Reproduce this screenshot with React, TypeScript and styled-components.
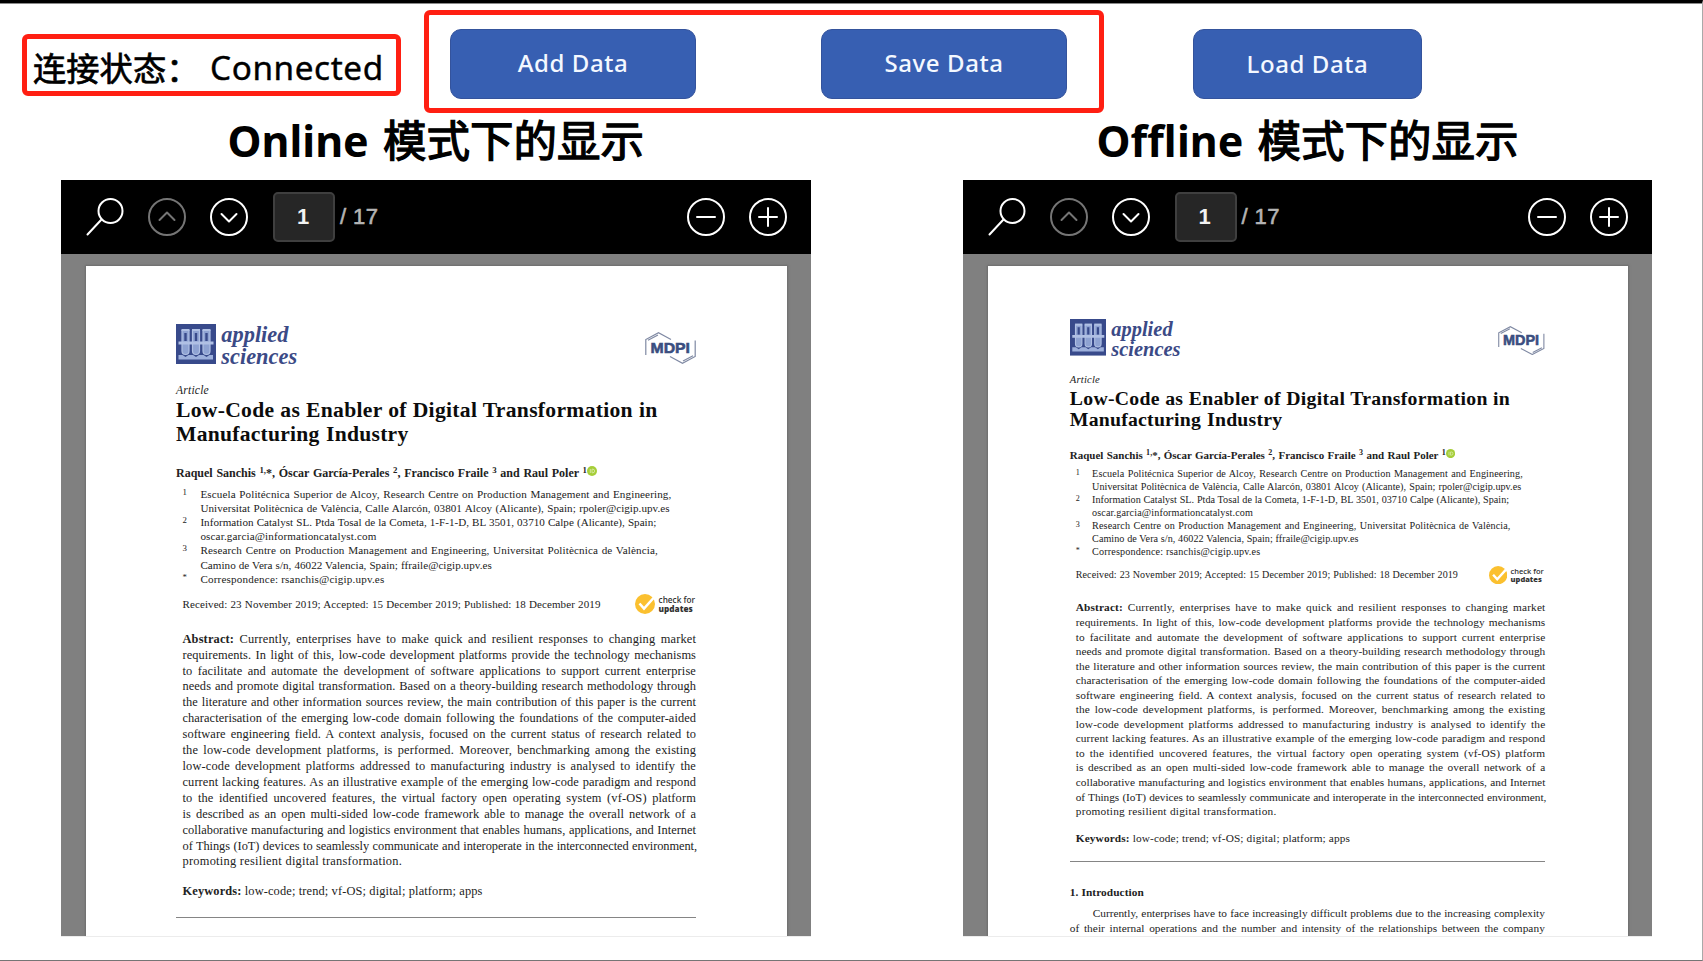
import React from "react";
import styled, { createGlobalStyle, css } from "styled-components";

const GlobalStyle = createGlobalStyle`
  * { box-sizing: border-box; }
  html, body { margin: 0; padding: 0; background: #fff; }
`;

const sans = `"Noto Sans", "Noto Sans CJK SC", sans-serif`;
const serif = `"Liberation Serif", serif`;

/* Document lengths scale with the zoom of the page they belong to. */
const u = (n: number) => `calc(var(--u) * ${n})`;

const Screen = styled.main`
  width: 1703px;
  height: 961px;
  overflow: hidden;
  border-top: 3px solid #000;
  border-right: 1px solid #a9a9a9;
  border-bottom: 1px solid #757575;
  background: #fff;
  font-family: ${sans};
  color: #000;
`;

const TopBar = styled.header`
  display: flex;
  align-items: flex-start;
  height: 111px;
  padding: 7px 0 0 22px;
  border-top: 1px solid #8a8a8a;
`;

const RedFrame = styled.div`
  display: flex;
  align-items: center;
  border: 5px solid #ff1f12;
  border-radius: 6px;
`;

const StatusFrame = styled(RedFrame)`
  width: 379px;
  height: 62px;
  margin-top: 23px;
  padding: 4px 0 0 6px;
  line-height: 50px;
  white-space: nowrap;
`;

const StatusLabel = styled.span`
  width: 177px;
  font-family: "Noto Sans CJK SC", sans-serif;
  font-size: 33.3px;
  -webkit-text-stroke: 0.7px #000;
`;

const StatusValue = styled.span`
  font-size: 33.3px;
  letter-spacing: 0.6px;
  -webkit-text-stroke: 0.4px #000;
`;

const ActionFrame = styled(RedFrame)`
  width: 680px;
  height: 103px;
  margin: -1px 89px 0 23px;
  padding: 4px 32px 0 21px;
  justify-content: space-between;
`;

const ActionButton = styled.button<{ $width: number }>`
  width: ${(p) => p.$width}px;
  height: 70px;
  padding: 0 0 2px;
  border: 1px solid #34539c;
  border-radius: 11px;
  background: #375fb2;
  color: #f4f8ff;
  font-family: ${sans};
  font-size: 24px;
  font-weight: 500;
  letter-spacing: 0.6px;
`;

const LoadButton = styled(ActionButton)`
  margin-top: 17.5px;
  padding-bottom: 0;
`;

const Columns = styled.section`
  display: flex;
  gap: 151.5px;
  padding-left: 61px;
`;

const Column = styled.div<{ $width: number }>`
  display: flex;
  flex-direction: column;
  width: ${(p) => p.$width}px;
`;

const Heading = styled.h1<{ $indent: number }>`
  height: 66px;
  margin: 0;
  padding-left: ${(p) => p.$indent}px;
  font-size: 43px;
  font-weight: 700;
  line-height: 54px;
  white-space: nowrap;
`;

const HeadingCjk = styled.span`
  margin-left: 3px;
  font-family: "Noto Sans CJK SC", sans-serif;
  font-size: 43.5px;
  font-weight: 400;
  line-height: 0;
  -webkit-text-stroke: 1.3px #000;
`;

const Viewer = styled.div`
  height: 757px;
  overflow: hidden;
  border-bottom: 1px solid #ececec;
  background: #808080;
`;

const Toolbar = styled.div`
  display: flex;
  align-items: center;
  height: 74px;
  padding: 0 24.5px 0 25px;
  background: #000;
`;

const ToolIcon = styled.svg<{ $dim?: boolean; $gap?: number }>`
  flex: none;
  width: 38px;
  height: 38px;
  margin-right: ${(p) => p.$gap ?? 0}px;
  fill: none;
  stroke: ${(p) => (p.$dim ? "#757575" : "#fff")};
  stroke-width: 2;
  stroke-linecap: round;
  stroke-linejoin: round;
`;

const PageInput = styled.div`
  display: flex;
  align-items: center;
  justify-content: center;
  width: 62px;
  height: 50px;
  padding-right: 2px;
  border: 2px solid #3f3f3f;
  border-radius: 5px;
  background: #262626;
  color: #f2f2f2;
  font: 700 22px "Liberation Sans", sans-serif;
`;

const PageCount = styled.div`
  flex: 1;
  padding-left: 5px;
  color: #b4b4b4;
  font: 22px "Liberation Sans", sans-serif;
  letter-spacing: 0.4px;
  -webkit-text-stroke: 0.6px #b4b4b4;
`;

const Page = styled.article<{ $scale: number }>`
  --u: ${(p) => p.$scale}px;
  height: 700px;
  margin: 12px 24px 0 25px;
  padding: ${u(58)} ${u(91)} 0 ${u(90)};
  background: #fff;
  box-shadow: 0 0 2px 1px #6c6c6c;
  color: #222;
  font-family: ${serif};
  white-space: nowrap;
`;

const Masthead = styled.div`
  display: flex;
  justify-content: space-between;
  height: ${u(40)};
`;

const Journal = styled.div`
  display: flex;
  gap: ${u(5.3)};
`;

const JournalName = styled.div`
  color: #3b4a86;
  font-size: ${u(22.4)};
  font-style: italic;
  font-weight: 700;
  line-height: ${u(22)};
`;

const JournalMark = styled.svg`
  width: ${u(40)};
  height: ${u(40)};
`;

const PublisherMark = styled.svg`
  width: ${u(51)};
  height: ${u(32)};
  margin-top: ${u(7.5)};
`;

const Line = styled.div<{ $w?: number; $indent?: number; $track?: number }>`
  width: ${(p) => (p.$w ? u(p.$w) : "auto")};
  margin-left: ${(p) => u(p.$indent ?? 0)};
  text-align: justify;
  text-align-last: justify;
  ${(p) =>
    p.$track !== undefined &&
    css`
      letter-spacing: ${u(p.$track)};
    `}
`;

const Kind = styled.div`
  margin-top: ${u(20)};
  font-size: ${u(11.6)};
  font-style: italic;
  line-height: ${u(14)};
  letter-spacing: ${u(0.2)};
`;

const Title = styled.h2`
  margin: ${u(1)} 0 0;
  color: #0c0c0c;
  font-size: ${u(21.6)};
  font-weight: 700;
  line-height: ${u(23.8)};
  letter-spacing: ${u(0.3)};
`;

const Authors = styled.div`
  display: flex;
  align-items: center;
  margin-top: ${u(18.2)};
  font-size: ${u(12)};
  font-weight: 700;
  line-height: ${u(16)};
`;

const Sup = styled.span`
  position: relative;
  top: ${u(-3.6)};
  font-size: ${u(8.8)};
  line-height: 0;
`;

const Orcid = styled.svg`
  width: ${u(10)};
  height: ${u(10)};
  margin: ${u(-3.5)} 0 0 ${u(0.4)};
`;

const Affiliations = styled.div`
  margin-top: ${u(6)};
  font-size: ${u(11.1)};
  line-height: ${u(14.17)};
  letter-spacing: ${u(0.04)};
`;

const Affiliation = styled.div`
  display: grid;
  grid-template-columns: ${u(17.9)} auto;
  padding-left: ${u(6.5)};
`;

const AffiliationMark = styled.span`
  font-size: ${u(8.8)};
  line-height: ${u(10)};
`;

const Dates = styled.div`
  display: flex;
  align-items: center;
  justify-content: space-between;
  height: ${u(22)};
  margin-top: ${u(6.9)};
  padding-left: ${u(6.5)};
  font-size: ${u(11)};
  line-height: ${u(22)};
  letter-spacing: ${u(0.1)};
`;

const Updates = styled.div`
  display: flex;
  align-items: center;
  gap: ${u(3.6)};
  width: ${u(61)};
  color: #333;
  font-family: "Open Sans", sans-serif;
  font-size: ${u(8.2)};
  font-weight: 600;
  line-height: ${u(9)};
  letter-spacing: 0;

  b { font-weight: 800; }
`;

const UpdatesMark = styled.svg`
  flex: none;
  width: ${u(20)};
  height: ${u(20)};
`;

const Body = styled.div<{ $top: number; $left?: number }>`
  margin-top: ${(p) => u(p.$top)};
  padding-left: ${(p) => u(p.$left ?? 0)};
  font-size: ${u(12.4)};
  line-height: ${u(15.9)};
  letter-spacing: ${u(0.06)};
`;

const Rule = styled.hr`
  height: 1px;
  margin: ${u(16.8)} 0 0;
  border: 0;
  background: #858585;
`;

type TextLine = { text: string; w?: number; track?: number };

const abstractLines: TextLine[] = [
  { text: "Currently, enterprises have to make quick and resilient responses to changing market", track: 0.15 },
  { text: "requirements. In light of this, low-code development platforms provide the technology mechanisms" },
  { text: "to facilitate and automate the development of software applications to support current enterprise", track: 0.12 },
  { text: "needs and promote digital transformation. Based on a theory-building research methodology through" },
  { text: "the literature and other information sources review, the main contribution of this paper is the current" },
  { text: "characterisation of the emerging low-code domain following the foundations of the computer-aided" },
  { text: "software engineering field. A context analysis, focused on the current status of research related to" },
  { text: "the low-code development platforms, is performed. Moreover, benchmarking among the existing", track: 0.15 },
  { text: "low-code development platforms addressed to manufacturing industry is analysed to identify the", track: 0.15 },
  { text: "current lacking features. As an illustrative example of the emerging low-code paradigm and respond", track: 0.1 },
  { text: "to the identified uncovered features, the virtual factory open operating system (vf-OS) platform", track: 0.15 },
  { text: "is described as an open multi-sided low-code framework able to manage the overall network of a" },
  { text: "collaborative manufacturing and logistics environment that enables humans, applications, and Internet", track: 0.02 },
  { text: "of Things (IoT) devices to seamlessly communicate and interoperate in the interconnected environment,", w: 514.5, track: -0.07 },
  { text: "promoting resilient digital transformation.", w: 219.6, track: 0.25 },
];

const affiliations: { mark: string; lines: TextLine[] }[] = [
  {
    mark: "1",
    lines: [
      { text: "Escuela Politécnica Superior de Alcoy, Research Centre on Production Management and Engineering,", w: 471, track: 0.12 },
      { text: "Universitat Politècnica de València, Calle Alarcón, 03801 Alcoy (Alicante), Spain; rpoler@cigip.upv.es", w: 469.2 },
    ],
  },
  {
    mark: "2",
    lines: [
      { text: "Information Catalyst SL. Ptda Tosal de la Cometa, 1-F-1-D, BL 3501, 03710 Calpe (Alicante), Spain;", w: 456, track: 0.02 },
      { text: "oscar.garcia@informationcatalyst.com", w: 175.7, track: 0.14 },
    ],
  },
  {
    mark: "3",
    lines: [
      { text: "Research Centre on Production Management and Engineering, Universitat Politècnica de València,", w: 457.5, track: 0.12 },
      { text: "Camino de Vera s/n, 46022 Valencia, Spain; ffraile@cigip.upv.es", w: 291.4 },
    ],
  },
  { mark: "*", lines: [{ text: "Correspondence: rsanchis@cigip.upv.es", w: 183.9, track: 0.18 }] },
];

function ViewerToolbar() {
  return (
    <Toolbar>
      <ToolIcon viewBox="0 0 38 38" $gap={24}>
        <circle cx="24.5" cy="13" r="12" />
        <path d="M15.5 21.5 1.5 36.5" />
      </ToolIcon>
      <ToolIcon viewBox="0 0 38 38" $dim $gap={24}>
        <circle cx="19" cy="19" r="18" />
        <path d="M11.5 22 19 14.5 26.5 22" />
      </ToolIcon>
      <ToolIcon viewBox="0 0 38 38" $gap={25}>
        <circle cx="19" cy="19" r="18" />
        <path d="M11.5 16 19 23.5 26.5 16" />
      </ToolIcon>
      <PageInput>1</PageInput>
      <PageCount>/ 17</PageCount>
      <ToolIcon viewBox="0 0 38 38" $gap={24}>
        <circle cx="19" cy="19" r="18" />
        <path d="M10 19h18" />
      </ToolIcon>
      <ToolIcon viewBox="0 0 38 38">
        <circle cx="19" cy="19" r="18" />
        <path d="M10 19h18M19 10v18" />
      </ToolIcon>
    </Toolbar>
  );
}

function TestTubes() {
  return (
    <JournalMark viewBox="0 0 40 40">
      <rect width="40" height="40" fill="#384a8b" />
      {[6, 16.5, 27].map((x) => (
        <g key={x}>
          <path d={`M${x} 6.5h7v20.5a3.5 3.5 0 0 1-7 0z`} fill="#8ea2d2" stroke="#b0c0e4" strokeWidth="1.2" />
          <path d={`M${x + 3.5} 9v8`} stroke="#384a8b" strokeWidth="2.4" />
          <path d={`M${x - 0.5} 6h8`} stroke="#b0c0e4" strokeWidth="2" />
        </g>
      ))}
      <path d="M2.5 17.5h35v3h-35z" fill="#b0c0e4" />
      <path d="M2.5 31h4l3 2 3-2h4.5l3 2 3-2h4.5l3 2 3-2h3.5v4.500h-34.500z" fill="#9db0dc" />
    </JournalMark>
  );
}

function Publisher() {
  return (
    <PublisherMark viewBox="0 0 51 32">
      <g fill="none" stroke="#7f89a3" strokeWidth="1.2">
        <path d="M.8 23V7.5L13.5.8 26 7.5M3 8.3 13 3" />
        <path d="M50.2 8.5V24.5L37.5 31.2 25 24.5M48 23.7 38 29" />
      </g>
      <text x="5.5" y="21.3" textLength="39.5" lengthAdjust="spacingAndGlyphs" fontFamily="Liberation Sans" fontSize="15.5" fontWeight="700" fill="#3a4e80" stroke="#3a4e80" strokeWidth="0.6">
        MDPI
      </text>
    </PublisherMark>
  );
}

function Introduction() {
  return (
    <>
      <Body $top={25.2}>
        <Line $w={80} $track={0.1}>
          <b>1. Introduction</b>
        </Line>
      </Body>
      <Body $top={7.2}>
        <Line $w={494.5} $indent={25} $track={0}>
          Currently, enterprises have to face increasingly difficult problems due to the increasing complexity
        </Line>
        <Line $w={519.5}>
          of their internal operations and the number and intensity of the relationships between the company
        </Line>
      </Body>
    </>
  );
}

function Paper({ scale, children }: { scale: number; children?: React.ReactNode }) {
  return (
    <Page $scale={scale}>
      <Masthead>
        <Journal>
          <TestTubes />
          <JournalName>
            applied
            <br />
            sciences
          </JournalName>
        </Journal>
        <Publisher />
      </Masthead>
      <Kind>Article</Kind>
      <Title>
        <Line $w={481.5}>Low-Code as Enabler of Digital Transformation in</Line>
        <Line $w={232.5} $track={0.25}>Manufacturing Industry</Line>
      </Title>
      <Authors>
        <Line $w={411}>
          Raquel Sanchis <Sup>1,</Sup>*, Óscar García-Perales <Sup>2</Sup>, Francisco Fraile <Sup>3</Sup> and Raul Poler <Sup>1</Sup>
        </Line>
        <Orcid viewBox="0 0 10 10">
          <circle cx="5" cy="5" r="5" fill="#a6ce39" />
          <path d="M3.3 3v4M5 3.2v3.6h.8a1.8 1.8 0 0 0 0-3.6z" fill="none" stroke="#e6f2c4" strokeWidth=".7" />
        </Orcid>
      </Authors>
      <Affiliations>
        {affiliations.map((a) => (
          <Affiliation key={a.mark}>
            <AffiliationMark>{a.mark}</AffiliationMark>
            <div>
              {a.lines.map((l) => (
                <Line key={l.text} $w={l.w} $track={l.track}>{l.text}</Line>
              ))}
            </div>
          </Affiliation>
        ))}
      </Affiliations>
      <Dates>
        <Line $w={418}>Received: 23 November 2019; Accepted: 15 December 2019; Published: 18 December 2019</Line>
        <Updates>
          <UpdatesMark viewBox="0 0 20 20">
            <circle cx="10" cy="10" r="10" fill="#fbc02f" />
            <path d="M4.5 9.5 9 14.5 18.5 4" fill="none" stroke="#fff" strokeWidth="2.6" />
          </UpdatesMark>
          <div>
            check for
            <br />
            <b>updates</b>
          </div>
        </Updates>
      </Dates>
      <Body $top={16.9} $left={6.5}>
        {abstractLines.map((l, i) => (
          <Line key={l.text} $w={l.w ?? 513.5} $track={l.track}>
            {i === 0 && <b>Abstract: </b>}
            {l.text}
          </Line>
        ))}
      </Body>
      <Body $top={14} $left={6.5}>
        <Line $w={300} $track={0.13}>
          <b>Keywords:</b> low-code; trend; vf-OS; digital; platform; apps
        </Line>
      </Body>
      <Rule />
      {children}
    </Page>
  );
}

export default function App() {
  return (
    <>
      <GlobalStyle />
      <Screen>
        <TopBar>
          <StatusFrame>
            <StatusLabel>连接状态：</StatusLabel>
            <StatusValue>Connected</StatusValue>
          </StatusFrame>
          <ActionFrame>
            <ActionButton $width={246}>Add Data</ActionButton>
            <ActionButton $width={246}>Save Data</ActionButton>
          </ActionFrame>
          <LoadButton $width={229}>Load Data</LoadButton>
        </TopBar>
        <Columns>
          <Column $width={750}>
            <Heading $indent={166.5}>
              Online <HeadingCjk>模式下的显示</HeadingCjk>
            </Heading>
            <Viewer>
              <ViewerToolbar />
              <Paper scale={1} />
            </Viewer>
          </Column>
          <Column $width={689.5}>
            <Heading $indent={134}>
              Offline <HeadingCjk>模式下的显示</HeadingCjk>
            </Heading>
            <Viewer>
              <ViewerToolbar />
              <Paper scale={0.9145}>
                <Introduction />
              </Paper>
            </Viewer>
          </Column>
        </Columns>
      </Screen>
    </>
  );
}
